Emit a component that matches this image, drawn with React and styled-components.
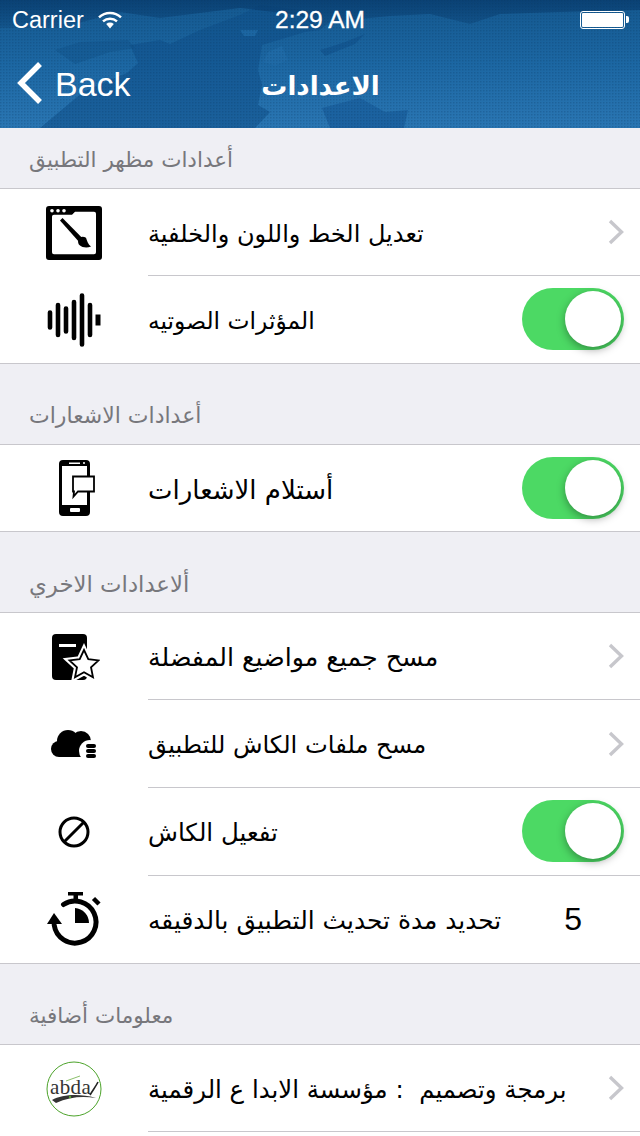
import React from 'react';
import styled, { createGlobalStyle } from 'styled-components';

const Global = createGlobalStyle`
  html, body { margin: 0; padding: 0; background: #efeff4; }
  body { width: 640px; height: 1136px; overflow: hidden; font-family: "Liberation Sans", sans-serif; }
`;

const ARABIC = '"DejaVu Sans", sans-serif';

const Chevron = () => (
  <ChevronIcon viewBox="0 0 16 26">
    <path d="M2 2 L13.5 13 L2 24" fill="none" stroke="#c7c7cc" strokeWidth="3.4" />
  </ChevronIcon>
);

const BrushIcon = () => (
  <svg width="56" height="54" viewBox="1 0 56 56" preserveAspectRatio="none">
    <path fillRule="evenodd" d="M4 0h50a3 3 0 0 1 3 3v50a3 3 0 0 1-3 3H4a3 3 0 0 1-3-3V3a3 3 0 0 1 3-3zM9 9a2 2 0 0 0-2 2v37a2 2 0 0 0 2 2h40a2 2 0 0 0 2-2V8a2 2 0 0 0-2-2H30l-3 3z" />
    <circle cx="7" cy="5" r="1.800" fill="#fff" /><circle cx="13" cy="5" r="1.800" fill="#fff" /><circle cx="19" cy="5" r="1.800" fill="#fff" />
    <path d="M15 15l2.500-2.500 19 20-3.500 3.500z" />
    <path d="M33 35c1-3 5-4 8-2 1 3 2 7 5 9-4 2-9 1-11-1-2-1-2-4-2-6z" />
  </svg>
);

const WaveIcon = () => (
  <svg width="54" height="54" viewBox="0 0 54 54" stroke="#000" strokeWidth="4.600" strokeLinecap="round">
    <path d="M3 19.500v15M11 12v30M19 15.500v23M27 9v36M35 2.500v49M43 12v30" />
    <path d="M51 21.500v11" strokeLinecap="butt" strokeWidth="5" />
  </svg>
);

const PhoneIcon = () => (
  <svg width="42" height="56" viewBox="-6 0 42 56">
    <path fillRule="evenodd" d="M4 0h23a4 4 0 0 1 4 4v48a4 4 0 0 1-4 4H4a4 4 0 0 1-4-4V4a4 4 0 0 1 4-4zM3 6v39h25V6z" />
    <rect x="10" y="2.500" width="11" height="1.500" fill="#fff" />
    <circle cx="25" cy="3" r="1" fill="#fff" />
    <rect x="11" y="48" width="10" height="4" rx="1" fill="#fff" />
    <path d="M14 16.500h21v15H19l-4.500 5 .5-5h-1z" fill="#fff" stroke="#000" strokeWidth="1.800" />
  </svg>
);

const StarBookIcon = () => (
  <svg width="52" height="46" viewBox="-4 0 52 46">
    <path d="M4 0h27a4 4 0 0 1 4 4v38a4 4 0 0 1-4 4H4a4 4 0 0 1-4-4V4a4 4 0 0 1 4-4z" />
    <rect x="7" y="10" width="17" height="3" fill="#fff" />
    <path d="M32 16l4.300 9.200 10.200 1.200-7.500 6.900 2 10-9-5-9 5 2-10-7.500-6.900 10.200-1.200z" fill="#fff" stroke="#fff" strokeWidth="6" />
    <path d="M32 16l4.300 9.200 10.200 1.200-7.500 6.900 2 10-9-5-9 5 2-10-7.500-6.900 10.200-1.200z" fill="#fff" stroke="#000" strokeWidth="1.800" />
  </svg>
);

const CloudIcon = () => (
  <svg width="46" height="28" viewBox="0 0 46 28">
    <circle cx="8" cy="19" r="8" />
    <circle cx="17" cy="11" r="11" />
    <circle cx="30" cy="11" r="10" />
    <rect x="8" y="13" width="28" height="14" />
    <circle cx="39" cy="21" r="11" fill="#fff" />
    <rect x="35" y="14" width="10" height="4" rx="2" />
    <rect x="35" y="19" width="10" height="4" rx="2" />
    <rect x="35" y="24" width="10" height="4" rx="2" />
  </svg>
);

const BlockedIcon = () => (
  <svg width="32" height="32" viewBox="0 0 32 32" fill="none" stroke="#000" strokeWidth="3">
    <circle cx="16" cy="16" r="14" />
    <path d="M6 26L26 6" />
  </svg>
);

const TimerIcon = () => (
  <svg width="54" height="56" viewBox="0 0 54 56">
    <rect x="21" y="0" width="15" height="3.500" />
    <rect x="26.500" y="3" width="4.500" height="6" />
    <path d="M16.500 12.500A21 21 0 1 1 7.200 33" fill="none" stroke="#000" strokeWidth="5" strokeLinecap="round" />
    <path d="M28 16a15 15 0 0 1 14 15H28z" />
    <path d="M0 32L7 21l8 11z" />
    <path d="M46.500 6.500l5.500 5.500" stroke="#000" strokeWidth="4.500" />
  </svg>
);

const AbdaLogo = () => (
  <svg width="56" height="56" viewBox="0 0 56 56">
    <circle cx="28" cy="28" r="27" fill="#fff" stroke="#4ca32a" strokeWidth="1" />
    <path d="M20 20l14-5" stroke="#8cc06c" strokeWidth="1" fill="none" />
    <text x="4" y="33" fontFamily="Liberation Serif, serif" fontSize="21" letterSpacing="0.400" fill="#333">abda</text>
    <path d="M44 34c3-5 6-9 8-13" stroke="#222" strokeWidth="1.600" fill="none" />
    <path d="M6 39c10-5 26-7 44-2-14-2-27-1-40 5z" fill="#333" />
    <circle cx="24" cy="36" r="1.200" fill="#5aa832" />
  </svg>
);

const WifiIcon = () => (
  <svg width="24" height="18" viewBox="0 0 24 18" fill="none" stroke="#fff" strokeWidth="2.400">
    <path d="M1 6.400a16 16 0 0 1 22 0" />
    <path d="M5 10.400a10.500 10.500 0 0 1 14 0" />
    <path d="M12 17.500l-3.800-4.400a5.600 5.600 0 0 1 7.600 0z" fill="#fff" stroke="none" />
  </svg>
);

const WorldMap = () => (
  <MapArt viewBox="0 0 640 128" preserveAspectRatio="none">
    <defs>
      <linearGradient id="land" x1="0" y1="0" x2="0" y2="1">
        <stop offset="0" stopColor="#14588f" />
        <stop offset="0.5" stopColor="#1c67a3" />
        <stop offset="1" stopColor="#2a76b3" />
      </linearGradient>
      <linearGradient id="topShade" x1="0" y1="0" x2="0" y2="1">
        <stop offset="0" stopColor="#073a6c" stopOpacity="0.75" />
        <stop offset="1" stopColor="#073a6c" stopOpacity="0.2" />
      </linearGradient>
      <pattern id="dots" width="3" height="3" patternUnits="userSpaceOnUse">
        <rect width="1.500" height="1.500" fill="#04305c" opacity="0.22" />
      </pattern>
    </defs>
    <rect width="640" height="128" fill="url(#land)" />
    {/* seas drawn over the land tone, coastlines are only rough */}
    <path d="M40 128L83 92L105 82L127 73L138 63L130 45L160 40L170 44L200 30L240 15L260 5L300 10L320 30L305 32L262 45L258 70L262 85L258 105L270 112L255 128Z" fill="#0f4f88" opacity="0.55" />
    <path d="M0 0H640V10L560 12L500 14L470 24L430 14L390 16L330 22L320 30L300 15L240 8L160 18L120 12L60 28L0 28Z" fill="url(#topShade)" />
    <path d="M55 50L80 42L128 40L135 48L110 52L75 64Z" fill="#0f4f88" opacity="0.4" />
    <path d="M320 50L330 47L345 42L365 34L355 44L340 50L325 56Z" fill="#0f4f88" opacity="0.55" />
    <path d="M322 108L360 98L385 112L408 110L404 128L330 128Z" fill="#1a5f9e" opacity="0.85" />
    <path d="M268 52L282 46L288 60L275 66L263 62Z" fill="#1f6aa6" />
    <path d="M240 30L258 30L255 36L244 36Z" fill="#1f6aa6" opacity="0.8" />
    <rect width="640" height="128" fill="url(#dots)" />
  </MapArt>
);

const rows = {
  look: [
    { label: 'تعديل الخط واللون والخلفية', size: 24, icon: <BrushIcon />, chevron: true },
    { label: 'المؤثرات الصوتيه', size: 23.4, icon: <WaveIcon />, toggle: true },
  ],
  notify: [{ label: 'أستلام الاشعارات', size: 26, icon: <PhoneIcon />, toggle: true }],
  other: [
    { label: 'مسح جميع مواضيع المفضلة', size: 25.3, icon: <StarBookIcon />, chevron: true },
    { label: 'مسح ملفات الكاش للتطبيق', size: 24.2, icon: <CloudIcon />, chevron: true },
    { label: 'تفعيل الكاش', size: 24.5, icon: <BlockedIcon />, toggle: true },
    { label: 'تحديد مدة تحديث التطبيق بالدقيقه', size: 24.9, icon: <TimerIcon />, value: '5' },
  ],
  about: [{ label: 'برمجة وتصميم  : مؤسسة الابدا ع الرقمية', size: 24.4, icon: <AbdaLogo />, chevron: true }],
};

const Section = ({ title, titleSize, items, first, trailing }) => (
  <>
    <SectionHead $first={first} $size={titleSize}><span dir="rtl">{title}</span></SectionHead>
    <Group $trailing={trailing}>
      {items.map((r, i) => {
        const full = i === items.length - 1 && !trailing;
        return (
          <Row key={r.label} $full={full}>
            <IconCell>{r.icon}</IconCell>
            <RowBody $full={full}>
              <Label dir="rtl" $size={r.size}>{r.label}</Label>
              {r.chevron && <Chevron />}
              {r.toggle && <Toggle><Knob /></Toggle>}
              {r.value && <Value>{r.value}</Value>}
            </RowBody>
          </Row>
        );
      })}
    </Group>
  </>
);

export default function App() {
  return (
    <Page>
      <Global />
      <NavBar>
        <WorldMap />
        <StatusBar>
          <Carrier>Carrier<WifiIcon /></Carrier>
          <Clock>2:29 AM</Clock>
          <Battery><BatteryFill /></Battery>
        </StatusBar>
        <NavRow>
          <BackLink>
            <svg width="28" height="44" viewBox="0 0 28 44">
              <path d="M24 3L5 22l19 19" fill="none" stroke="#fff" strokeWidth="5.500" />
            </svg>
            <span>Back</span>
          </BackLink>
          <NavTitle dir="rtl">الاعدادات</NavTitle>
        </NavRow>
      </NavBar>
      <Section first title="أعدادات مظهر التطبيق" titleSize={21.5} items={rows.look} />
      <Section title="أعدادات الاشعارات" titleSize={22} items={rows.notify} />
      <Section title="ألاعدادات الاخري" titleSize={22.8} items={rows.other} />
      <Section trailing title="معلومات أضافية" titleSize={21.5} items={rows.about} />
    </Page>
  );
}

const Page = styled.div`
  width: 640px;
  height: 1136px;
  overflow: hidden;
  background: #efeff4;
`;

const NavBar = styled.header`
  position: relative;
  height: 128px;
  overflow: hidden;
  color: #fff;
`;

const MapArt = styled.svg`
  position: absolute;
  inset: 0;
  width: 640px;
  height: 128px;
`;

const StatusBar = styled.div`
  position: relative;
  height: 40px;
  display: grid;
  grid-template-columns: 1fr auto 1fr;
  align-items: center;
  padding: 0 12px;
  font-size: 24px;
`;

const Carrier = styled.div`
  display: flex;
  align-items: center;
  gap: 14px;
  font-size: 23.500px;
`;

const Clock = styled.div`
  font-size: 24.500px;
  font-weight: 500;
  -webkit-text-stroke: 0.3px #fff;
`;

const Battery = styled.div`
  justify-self: end;
  position: relative;
  width: 41px;
  height: 14px;
  border: 1px solid #fff;
  border-radius: 3px;
  padding: 1px;
  margin-right: 3px;
  box-sizing: content-box;

  &::after {
    content: '';
    position: absolute;
    right: -5px;
    top: 4px;
    width: 3px;
    height: 7px;
    background: #fff;
    border-radius: 0 2px 2px 0;
  }
`;

const BatteryFill = styled.div`
  height: 100%;
  background: #fff;
  border-radius: 1px;
`;

const NavRow = styled.div`
  position: relative;
  height: 88px;
  display: flex;
  align-items: center;
  padding-left: 16px;
`;

const BackLink = styled.div`
  display: flex;
  align-items: center;
  gap: 11px;
  font-size: 34px;
  line-height: 44px;
  margin-top: -2px;

  span {
    padding-top: 2px;
  }
`;

const NavTitle = styled.div`
  position: absolute;
  left: 261px;
  top: 26px;
  width: 119px;
  text-align: center;
  font-family: ${ARABIC};
  font-size: 26px;
  line-height: 40px;
  font-weight: 700;
  white-space: nowrap;
`;

const SectionHead = styled.div`
  box-sizing: border-box;
  height: ${(p) => (p.$first ? 60 : 80)}px;
  padding: 0 29px 14px;
  display: flex;
  align-items: flex-end;
  justify-content: flex-start;
  color: #77777c;
  font-family: ${ARABIC};
  font-size: ${(p) => p.$size}px;
  line-height: 28px;
`;

const Group = styled.div`
  background: #fff;
  border-top: 1px solid #c8c7cc;
  padding-bottom: ${(p) => (p.$trailing ? 5 : 0)}px;
`;

const Row = styled.div`
  box-sizing: border-box;
  display: flex;
  height: 88px;
  align-items: stretch;
  border-bottom: ${(p) => (p.$full ? '1px solid #c8c7cc' : 'none')};

  &:first-child {
    height: 87px;
  }
`;

const IconCell = styled.div`
  flex: 0 0 148px;
  display: flex;
  align-items: center;
  justify-content: center;
`;

const RowBody = styled.div`
  flex: 1;
  display: flex;
  align-items: center;
  justify-content: space-between;
  border-bottom: ${(p) => (p.$full ? 'none' : '1px solid #c8c7cc')};
  padding-right: 16px;
`;

const Label = styled.div`
  font-family: ${ARABIC};
  font-size: ${(p) => p.$size}px;
  line-height: 40px;
  padding-top: 3px;
  color: #000;
  white-space: pre;
`;

const ChevronIcon = styled.svg`
  width: 16px;
  height: 26px;
`;

const Toggle = styled.div`
  position: relative;
  width: 102px;
  height: 62px;
  margin-top: -1px;
  border-radius: 31px;
  background: #4cd964;
`;

const Knob = styled.div`
  position: absolute;
  right: 3px;
  top: 3px;
  width: 56px;
  height: 56px;
  border-radius: 50%;
  background: #fff;
  box-shadow: 0 3px 8px rgba(0, 0, 0, 0.35);
`;

const Value = styled.div`
  margin-right: 42px;
  font-size: 32px;
  color: #000;
`;
